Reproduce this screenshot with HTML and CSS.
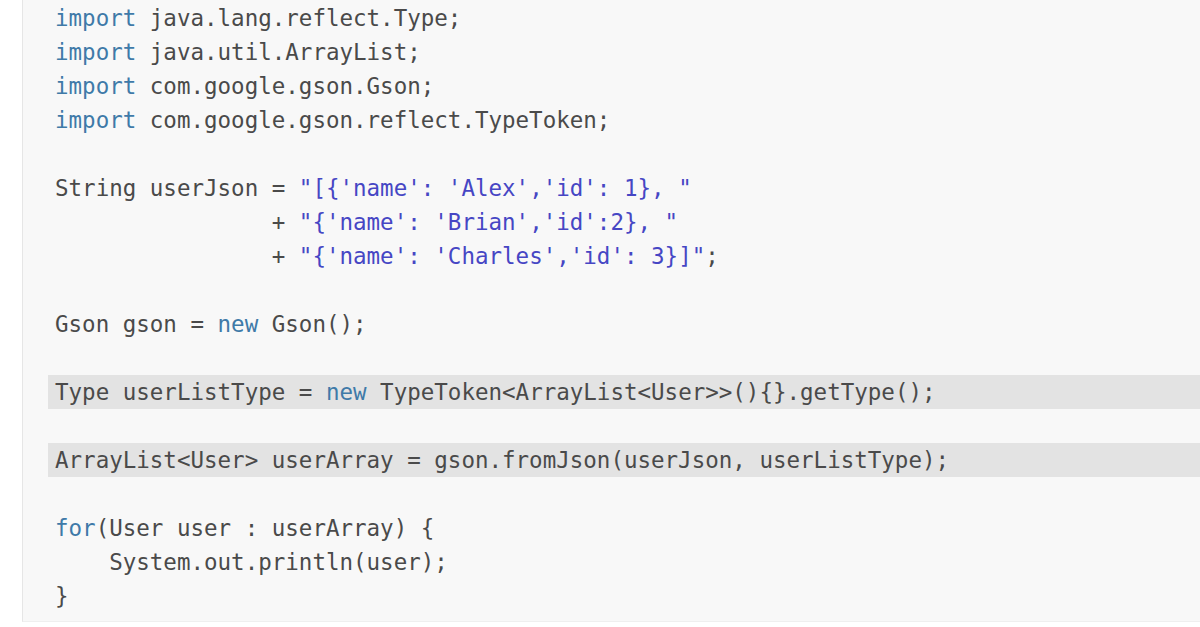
FILE: index.html
```html
<!DOCTYPE html>
<html>
<head>
<meta charset="utf-8">
<link rel="stylesheet" href="styles.css">
</head>
<body>
<div class="page">
  <div class="panel">
    <pre class="code"><span class="ln"><span class="kw">import</span> java.lang.reflect.Type;</span><span class="ln"><span class="kw">import</span> java.util.ArrayList;</span><span class="ln"><span class="kw">import</span> com.google.gson.Gson;</span><span class="ln"><span class="kw">import</span> com.google.gson.reflect.TypeToken;</span><span class="ln"> </span><span class="ln">String userJson = <span class="str">"[{'name': 'Alex','id': 1}, "</span></span><span class="ln">                + <span class="str">"{'name': 'Brian','id':2}, "</span></span><span class="ln">                + <span class="str">"{'name': 'Charles','id': 3}]"</span>;</span><span class="ln"> </span><span class="ln">Gson gson = <span class="kw">new</span> Gson();</span><span class="ln"> </span><span class="ln hl">Type userListType = <span class="kw">new</span> TypeToken&lt;ArrayList&lt;User&gt;&gt;(){}.getType();</span><span class="ln"> </span><span class="ln hl">ArrayList&lt;User&gt; userArray = gson.fromJson(userJson, userListType);</span><span class="ln"> </span><span class="ln"><span class="kw">for</span>(User user : userArray) {</span><span class="ln">    System.out.println(user);</span><span class="ln">}</span></pre>
  </div>
</div>
</body>
</html>
```
FILE: styles.css
```css
html, body {
  margin: 0;
  padding: 0;
  background: #ffffff;
}

.page {
  width: 1200px;
  height: 627px;
  padding-left: 22px;
  box-sizing: border-box;
  overflow: hidden;
}

.panel {
  height: 622px;
  background: #f8f8f8;
  border-left: 1px solid #e6e6e6;
  border-bottom: 1px solid #efefef;
  box-sizing: border-box;
  padding-top: 1px;
}

.code {
  margin: 0;
  font-family: "DejaVu Sans Mono", "Liberation Mono", monospace;
  font-size: 22.5px;
  color: #4a4a4a;
  white-space: pre;
}

.ln {
  display: block;
  height: 34px;
  line-height: 34px;
  padding-left: 32px;
}

.ln.hl {
  background: #e3e3e3;
  margin-left: 25px;
  padding-left: 7px;
}

.kw {
  color: #3f7aa8;
}

.str {
  color: #4646c4;
}
```
